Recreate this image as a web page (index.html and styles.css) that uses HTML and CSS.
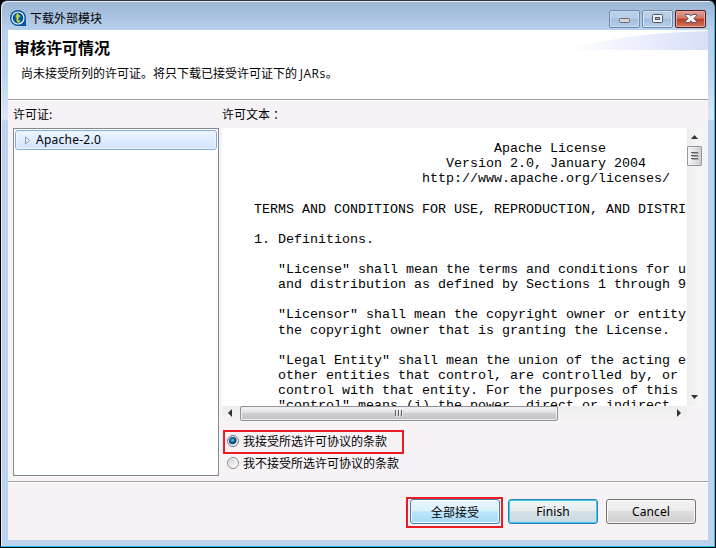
FILE: index.html
```html
<!DOCTYPE html>
<html lang="zh-CN">
<head>
<meta charset="utf-8">
<title>下载外部模块</title>
<link rel="stylesheet" href="styles.css">
</head>
<body>
<div class="window">
  <header class="titlebar">
    <svg class="logo" width="17" height="17" viewBox="0 0 17 17"><path d="M8 0a8 8 0 1 0 0 16h8V8a8 8 0 0 0-8-8z" fill="#07589b"/><circle cx="8" cy="8" r="6" fill="#07589b" stroke="#e8f3fa" stroke-width="1.2"/><path d="M7.5 3.6v6.7q0 1.7 2.6 1.2M5.7 6.2h4.3" fill="none" stroke="#c5d92d" stroke-width="2"/></svg>
    <span class="caption">下载外部模块</span>
    <div class="controls">
      <span class="control"><svg width="29" height="16"><rect x="9.5" y="7.5" width="10" height="4" rx="1" fill="#d9d8d6" stroke="#626a7c"/></svg></span>
      <span class="control"><svg width="29" height="16"><rect x="9.5" y="3.5" width="10" height="8" rx="1" fill="#f4f4f4" stroke="#4e556a"/><rect x="12.5" y="6.5" width="4" height="2" fill="#9ab4d1" stroke="#4e556a"/></svg></span>
      <span class="control close"><svg width="29" height="16"><path d="M9.5 3.5h3.8l1.7 1.7 1.7-1.7h3.8v1.3L17.8 7.5l2.7 2.7v1.3h-3.8L15 9.8l-1.7 1.7H9.5v-1.3l2.7-2.7-2.7-2.7z" fill="#fafafa" stroke="#53566b"/></svg></span>
    </div>
  </header>
  <main class="client">
    <section class="banner">
      <div class="intro"><h1>审核许可情况</h1><p>尚未接受所列的许可证。将只下载已接受许可证下的 <span class="latin">JARs</span>。</p></div>
      <svg class="swoosh" width="140" height="20"><defs><linearGradient id="sw"><stop offset="0" stop-color="#fff"/><stop offset=".45" stop-color="#eef1fd"/><stop offset="1" stop-color="#d6dff8"/></linearGradient></defs><path d="M0 20Q55 3 140 1V20z" fill="url(#sw)"/></svg>
    </section>
    <section class="body">
      <div class="licenses">
        <div class="label">许可证:</div>
        <div class="tree"><div class="item"><svg width="7" height="9"><path d="M1.5 1v7l4-3.5z" fill="#fff" stroke="#8a95a6"/></svg><span>Apache-2.0</span></div></div>
      </div>
      <div class="details">
        <div class="label">许可文本<span class="colon">：</span></div>
        <div class="viewer">
<pre class="text">                                 Apache License
                           Version 2.0, January 2004
                        http://www.apache.org/licenses/

   TERMS AND CONDITIONS FOR USE, REPRODUCTION, AND DISTRI

   1. Definitions.

      "License" shall mean the terms and conditions for u
      and distribution as defined by Sections 1 through 9

      "Licensor" shall mean the copyright owner or entity
      the copyright owner that is granting the License.

      "Legal Entity" shall mean the union of the acting e
      other entities that control, are controlled by, or
      control with that entity. For the purposes of this
      "control" means (i) the power, direct or indirect,</pre>
          <div class="vbar">
            <svg width="15" height="18"><path d="M4 11l3.5-4 3.5 4z" fill="#333"/></svg>
            <div class="vthumb"><svg width="13" height="18"><path d="M3 5.5h7M3 8.5h7M3 11.5h7" stroke="#5d5d66"/><path d="M4 6.5h7M4 9.5h7M4 12.5h7" stroke="#aaa"/></svg></div>
            <svg class="end" width="15" height="18"><path d="M4 7h7l-3.5 4z" fill="#333"/></svg>
          </div>
          <div class="hbar">
            <svg width="18" height="15"><path d="M10 3v8L6 7z" fill="#333"/></svg>
            <div class="hthumb"><svg width="10" height="13"><path d="M1.5 3v6M4.5 3v6M7.5 3v6" stroke="#5d5d66"/><path d="M2.5 4v6M5.5 4v6M8.5 4v6" stroke="#eee"/></svg></div>
            <svg class="end" width="17" height="15"><path d="M7 3v8l4-4z" fill="#333"/></svg>
          </div>
        </div>
        <div class="choices">
          <div class="choice marked"><i class="radio on"></i>我接受所选许可协议的条款</div>
          <div class="choice"><i class="radio"></i>我不接受所选许可协议的条款</div>
        </div>
      </div>
    </section>
    <footer class="actions">
      <div class="highlight"><button class="btn hot">全部接受</button></div>
      <button class="btn primary">Finish</button>
      <button class="btn">Cancel</button>
    </footer>
  </main>
</div>
</body>
</html>
```
FILE: styles.css
```css
* { box-sizing: border-box; }
body { margin: 0; background: #000; font: 12px/18px "Noto Sans", "Noto Sans CJK SC", sans-serif; color: #000; }
svg { display: block; flex: none; }
.window {
  width: 716px; height: 548px; padding: 0 6px 6px;
  border: 1px solid #000; border-top-color: #30343c;
  border-radius: 7px 7px 0 0;
  background: linear-gradient(#9bb5d5 0, #b9d1ec 30px, #bdd3ef 72px, #dbe8f8 118px, #bcd2ee 120px);
  box-shadow: inset -1px -1px #19c5e8, inset 1px 1px #e3eef9;
}
.titlebar { height: 29px; display: flex; align-items: flex-start; padding: 9px 3px 0; }
.caption { margin: -1px 0 0 3px; font-family: "Noto Sans CJK SC", sans-serif; }
.controls { display: flex; gap: 2px; margin-left: auto; }
.control { width: 31px; height: 18px; border: 1px solid #718aaa; border-radius: 2px; background: linear-gradient(#b9cee7 45%, #a2bcda 50%, #b7cfea); box-shadow: inset 0 0 0 1px #cadbef; }
.control + .control { box-shadow: inset 0 0 0 1px #d6e4f4; }
.control.close { border-color: #511d20; background: linear-gradient(#dfa095, #cf7969 45%, #bd3a25 50%, #d27956); box-shadow: inset 0 0 0 1px #e6a99f; }
.client { width: 700px; height: 510px; margin-left: 1px; display: flex; flex-direction: column; background: #f6f2f6; }
.banner { height: 71px; background: #fff; border-bottom: 1px solid #fff; box-shadow: inset 0 -1px #a0a0a0; display: flex; justify-content: space-between; }
.intro { padding: 6px 0 0 6px; }
h1 { margin: 0; font: bold 16px/22px "Noto Sans CJK SC", sans-serif; }
p { margin: 6px 0 0 7px; line-height: 18px; font-family: "Noto Sans CJK SC", sans-serif; white-space: nowrap; }
.latin { font-family: "Open Sans", sans-serif; letter-spacing: 0.5px; }
.body { height: 380px; display: flex; gap: 3px; padding-left: 5px; }
.licenses { width: 206px; }
.label { height: 27px; padding-top: 5px; font-family: "Noto Sans CJK SC", sans-serif; }
.licenses .label { padding-top: 4px; }
.details .label { padding-top: 4px; }
.colon { padding-left: 3px; }
.tree { height: 348px; border: 1px solid #828790; background: #fff; padding: 1px; }
.item { height: 20px; border: 1px solid #84acdd; border-radius: 3px; background: linear-gradient(#edf5ff, #cfe4ff); box-shadow: inset 0 0 0 1px #edf6ff; display: flex; align-items: center; gap: 5px; padding-left: 8px; letter-spacing: 0.25px; }
.details { width: 480px; }
.viewer { display: grid; grid-template: 278px 15px / 465px 15px; }
.text { margin: 0; padding: 13px 0 0 8px; overflow: hidden; background: #fff; font: 13.333px/15.13px "Liberation Mono", monospace; }
.vbar { display: flex; flex-direction: column; background: linear-gradient(90deg, #ededed, #f3f2f3 50%, #faf8fa); }
.vthumb { height: 20px; border: 1px solid #96969c; border-radius: 1px; background: linear-gradient(90deg, #f5f5f5, #e6e6e8 45%, #cfcfd3); }
.vbar .end { margin-top: auto; }
.hbar { display: flex; background: linear-gradient(#ededed, #f5f3f5); }
.hthumb { width: 318px; height: 15px; border: 1px solid #909096; border-radius: 2px; background: linear-gradient(#f5f5f5, #e4e4e6 40%, #cfcfd3 50%, #c0c0c5); box-shadow: inset 0 0 0 1px #f0f0f2; display: flex; justify-content: center; }
.hbar .end { margin-left: auto; }
.choices { padding: 9px 0 0 1px; display: flex; flex-direction: column; align-items: flex-start; }
.choice { height: 18px; display: flex; align-items: center; padding-left: 4px; gap: 4px; font-family: "Noto Sans CJK SC", sans-serif; }
.choice.marked { width: 181px; height: 24px; border: 2px solid #ed1c24; padding: 0 0 2px 2px; }
.radio { width: 12px; height: 12px; border: 1px solid #8e8f8f; border-radius: 50%; background: linear-gradient(135deg, #c8ccd1, #f6f6f6 75%); box-shadow: inset 0 0 0 1px #f4f4f4; }
.radio.on { background: radial-gradient(circle at 45% 42%, #7bd3f5 0, #1a7cb0 20%, #0b3557 46%, #e8eef2 56%); border-color: #6f7985; }
.actions { height: 59px; border-top: 1px solid #a0a0a0; box-shadow: inset 0 1px #fff; display: flex; justify-content: flex-end; padding: 15px 12px 0 0; }
.highlight { width: 97px; height: 31px; border: 2px solid #ed1c24; padding: 0 1px 0 2px; margin-right: 5px; }
.btn { width: 90px; height: 25px; margin: 2px 0 0; padding: 0; border: 1px solid #707070; border-radius: 3px; background: linear-gradient(#f3f3f3, #ebebeb 48%, #dddddd 50%, #cfcfcf); box-shadow: inset 0 0 0 1px #fafafa; font: inherit; line-height: 20px; letter-spacing: 0.1px; color: #000; }
.btn + .btn { margin-left: 8px; }
.highlight .btn { margin-top: 0; }
.hot { border-color: #3c7fb1; background: linear-gradient(#eaf6fd, #d9f0fc 48%, #bee6fd 50%, #a7d9f5); font-family: "Noto Sans CJK SC", sans-serif; }
.primary { border-color: #2d83b0; background: linear-gradient(#f1f5f6, #e5edf0 48%, #d4e1e5 50%, #c9dbdf); box-shadow: inset 0 0 0 1px #3bc8ef; }
```
